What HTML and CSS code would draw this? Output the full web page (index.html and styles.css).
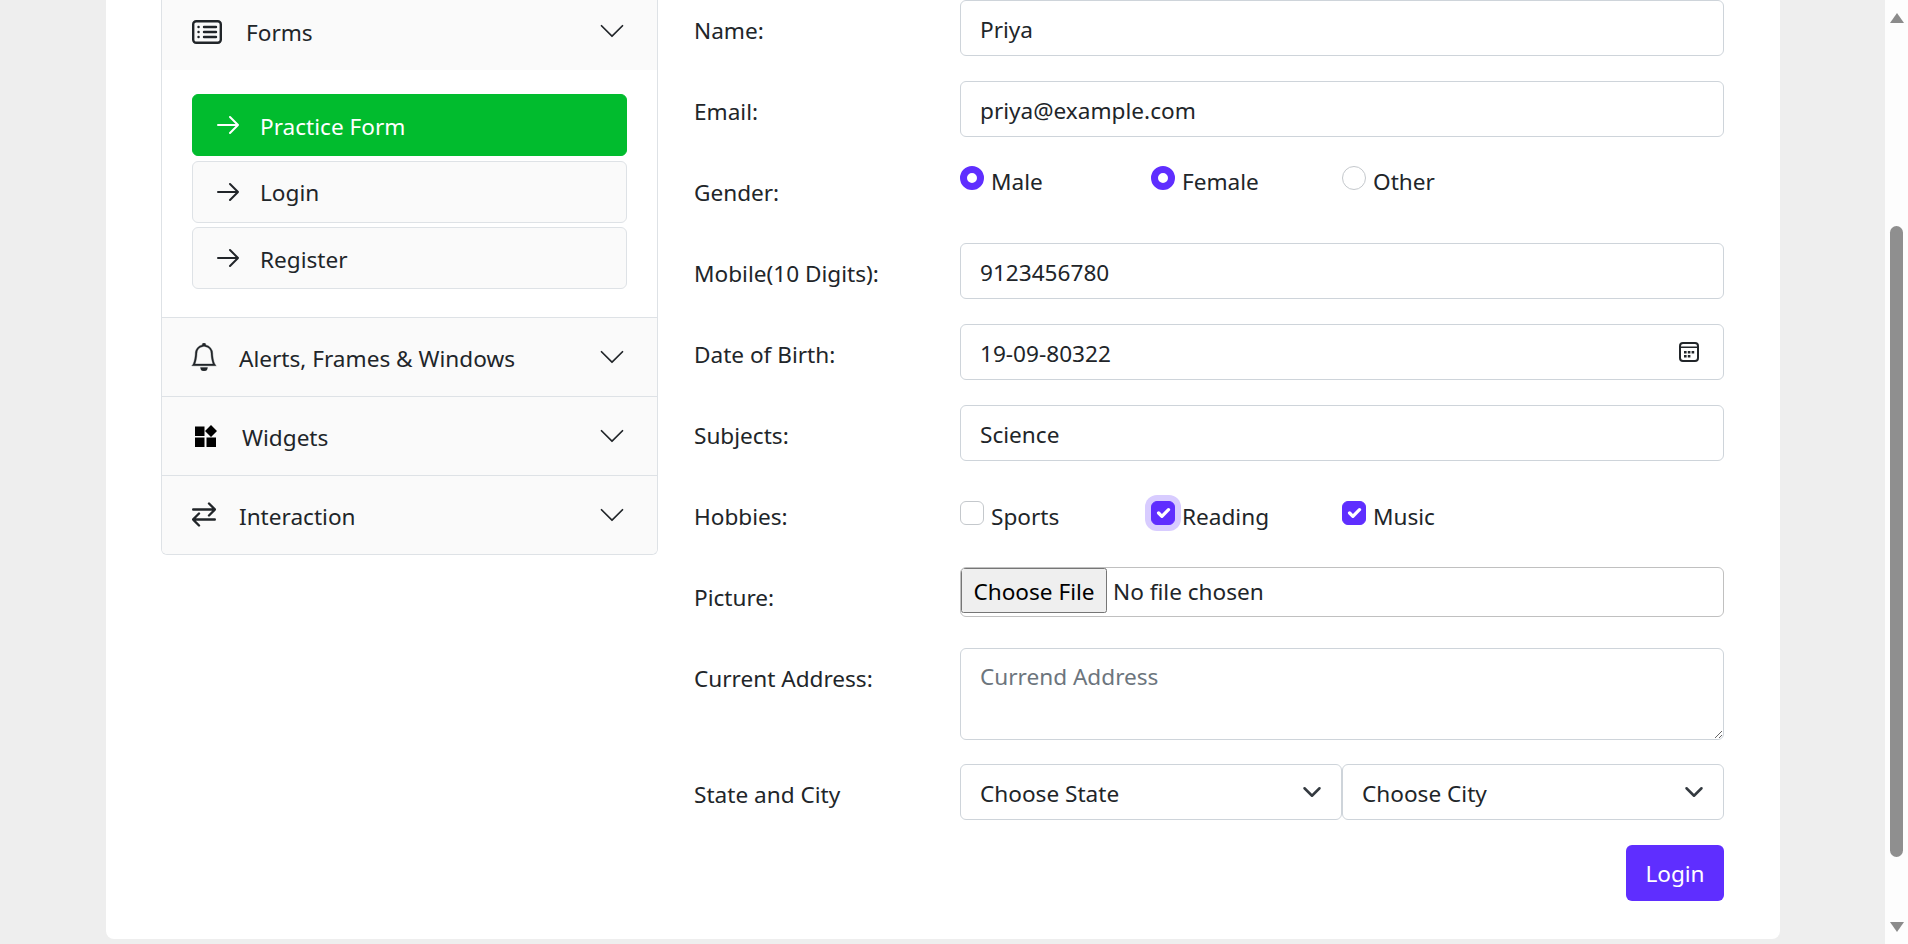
FILE: index.html
```html
<!DOCTYPE html>
<html>
<head>
	<meta charset="UTF-8">
	<title>Practice Form</title>
	<link rel="stylesheet" href="styles.css">
</head>
<body>
	<main class="page">
		<div class="card">
			<!-- menu lateral -->
			<nav class="sidebar">
				<div class="menu-head menu-head-open">
					<svg class="icon-forms" viewBox="0 0 30 24" fill="none" stroke="currentColor" stroke-width="2.4" stroke-linecap="round"><rect x="1.2" y="1.2" width="27.6" height="21.6" rx="3"/><path d="M12 7h12M12 12h12M12 17h12M6.5 7h.1M6.5 12h.1M6.5 17h.1"/></svg>
					<span class="menu-title menu-title-forms">Forms</span>
					<svg class="chevron" viewBox="0 0 16 16" fill="currentColor"><path d="M1.646 4.646a.5.5 0 0 1 .708 0L8 10.293l5.646-5.647a.5.5 0 0 1 .708.708l-6 6a.5.5 0 0 1-.708 0l-6-6a.5.5 0 0 1 0-.708"/></svg>
				</div>
				<div class="submenu">
					<a class="submenu-item active"><svg class="arrow" viewBox="0 0 22 20" fill="none" stroke="currentColor" stroke-width="2" stroke-linecap="round" stroke-linejoin="round"><path d="M1 10h20M13 2l8 8-8 8"/></svg>Practice Form</a>
					<a class="submenu-item"><svg class="arrow" viewBox="0 0 22 20" fill="none" stroke="currentColor" stroke-width="2" stroke-linecap="round" stroke-linejoin="round"><path d="M1 10h20M13 2l8 8-8 8"/></svg>Login</a>
					<a class="submenu-item"><svg class="arrow" viewBox="0 0 22 20" fill="none" stroke="currentColor" stroke-width="2" stroke-linecap="round" stroke-linejoin="round"><path d="M1 10h20M13 2l8 8-8 8"/></svg>Register</a>
				</div>
				<div class="menu-head">
					<svg class="icon-bell" viewBox="0 0 16 16" fill="currentColor" stroke="currentColor" stroke-width="0.2"><path d="M8 16a2 2 0 0 0 2-2H6a2 2 0 0 0 2 2M8 1.918l-.797.161A4 4 0 0 0 4 6c0 .628-.134 2.197-.459 3.742-.16.767-.376 1.566-.663 2.258h10.244c-.287-.692-.502-1.49-.663-2.258C12.134 8.197 12 6.628 12 6a4 4 0 0 0-3.203-3.92zM14.22 12c.223.447.481.801.78 1H1c.299-.199.557-.553.78-1C2.68 10.2 3 6.88 3 6c0-2.42 1.72-4.44 4.005-4.901a1 1 0 1 1 1.99 0A5 5 0 0 1 13 6c0 .88.32 4.2 1.22 6"/></svg>
					<span class="menu-title">Alerts, Frames &amp; Windows</span>
					<svg class="chevron" viewBox="0 0 16 16" fill="currentColor"><path d="M1.646 4.646a.5.5 0 0 1 .708 0L8 10.293l5.646-5.647a.5.5 0 0 1 .708.708l-6 6a.5.5 0 0 1-.708 0l-6-6a.5.5 0 0 1 0-.708"/></svg>
				</div>
				<div class="menu-head">
					<svg class="icon-widgets" viewBox="0 0 22 22" fill="#000"><path d="M0 1.5h9.5V11H0zM0 12.5h9.5V22H0zM11.5 12.5H21V22h-9.5zM16 0l6 6-6 6-6-6z"/></svg>
					<span class="menu-title menu-title-widgets">Widgets</span>
					<svg class="chevron" viewBox="0 0 16 16" fill="currentColor"><path d="M1.646 4.646a.5.5 0 0 1 .708 0L8 10.293l5.646-5.647a.5.5 0 0 1 .708.708l-6 6a.5.5 0 0 1-.708 0l-6-6a.5.5 0 0 1 0-.708"/></svg>
				</div>
				<div class="menu-head">
					<svg class="icon-swap" viewBox="0 0 24 25" fill="none" stroke="currentColor" stroke-width="2.4" stroke-linecap="round" stroke-linejoin="round"><path d="M1.2 7.5h21.6M17 1.5l6 6-6 6M22.8 17.5H1.2M7 11.5l-6 6 6 6"/></svg>
					<span class="menu-title">Interaction</span>
					<svg class="chevron" viewBox="0 0 16 16" fill="currentColor"><path d="M1.646 4.646a.5.5 0 0 1 .708 0L8 10.293l5.646-5.647a.5.5 0 0 1 .708.708l-6 6a.5.5 0 0 1-.708 0l-6-6a.5.5 0 0 1 0-.708"/></svg>
				</div>
			</nav>

			<!-- formulario -->
			<form class="form">
				<div class="row">
					<label class="row-label">Name:</label>
					<input class="field" type="text" value="Priya">
				</div>
				<div class="row">
					<label class="row-label">Email:</label>
					<input class="field" type="text" value="priya@example.com">
				</div>
				<div class="row">
					<label class="row-label">Gender:</label>
					<div class="options options-gender">
						<label class="option"><input class="radio" type="radio" name="g1" checked>Male</label>
						<label class="option"><input class="radio" type="radio" name="g2" checked>Female</label>
						<label class="option"><input class="radio" type="radio" name="g3">Other</label>
					</div>
				</div>
				<div class="row">
					<label class="row-label">Mobile(10 Digits):</label>
					<input class="field" type="text" value="9123456780">
				</div>
				<div class="row">
					<label class="row-label">Date of Birth:</label>
					<div class="date-wrap">
						<input class="field" type="text" value="19-09-80322">
						<svg class="date-icon" viewBox="0 0 20 20" fill="currentColor"><rect x="1" y="1" width="18" height="18" rx="3" fill="none" stroke="currentColor" stroke-width="2"/><path d="M1 4.5h18v1.4H1zM5 9h2.6v2.6H5zM8.8 9h2.6v2.6H8.8zM12.6 9h2.6v2.6h-2.6zM5 13h2.6v2.6H5zM8.8 13h2.6v2.6H8.8z"/></svg>
					</div>
				</div>
				<div class="row">
					<label class="row-label">Subjects:</label>
					<input class="field" type="text" value="Science">
				</div>
				<div class="row">
					<label class="row-label">Hobbies:</label>
					<div class="options options-hobbies">
						<label class="option"><input class="check" type="checkbox">Sports</label>
						<label class="option"><input class="check check-focus" type="checkbox" checked>Reading</label>
						<label class="option"><input class="check" type="checkbox" checked>Music</label>
					</div>
				</div>
				<div class="row">
					<label class="row-label">Picture:</label>
					<input class="file" type="file">
				</div>
				<div class="row row-area">
					<label class="row-label">Current Address:</label>
					<textarea class="field area" placeholder="Currend Address"></textarea>
				</div>
				<div class="row">
					<label class="row-label">State and City</label>
					<div class="selects">
						<select class="field select"><option>Choose State</option></select>
						<select class="field select"><option>Choose City</option></select>
					</div>
				</div>
				<div class="actions">
					<button class="btn-login" type="button">Login</button>
				</div>
			</form>
		</div>
	</main>

	<!-- barra de desplazamiento -->
	<div class="scrollbar">
		<span class="scroll-up"></span>
		<span class="scroll-thumb"></span>
		<span class="scroll-down"></span>
	</div>
</body>
</html>
```

FILE: styles.css
```css
* {
	box-sizing: border-box;
}

html, body {
	height: 100%;
}

body {
	margin: 0;
	display: flex;
	overflow: hidden;
	background-color: #eeeeee;
	color: #212529;
	font-family: 'Noto Sans', sans-serif;
	font-size: 22.6px;
}

.page {
	flex: 1;
	padding: 0 105px 5px 106px;
}

.card {
	display: flex;
	align-items: flex-start;
	height: 100%;
	padding: 0 56px 0 55px;
	background-color: #fff;
	border-radius: 0 0 8px 8px;
}

/* Menu lateral */
.sidebar {
	width: 497px;
	flex-shrink: 0;
	border: 1px solid #dee2e6;
	border-top: none;
	border-radius: 0 0 6px 6px;
	overflow: hidden;
}

.menu-head {
	display: flex;
	align-items: center;
	height: 79px;
	padding: 0 30px;
	background-color: #fafafa;
	border-top: 1px solid #dee2e6;
}

.menu-head-open {
	height: 70px;
	padding-bottom: 7px;
	border-top: none;
}

.icon-forms {
	width: 30px;
	height: 24px;
	flex-shrink: 0;
}

.icon-bell {
	width: 28px;
	height: 28px;
	flex-shrink: 0;
	margin-left: -2px;
}

.icon-widgets {
	width: 22px;
	height: 22px;
	flex-shrink: 0;
	margin-left: 3px;
}

.icon-swap {
	width: 24px;
	height: 25px;
	flex-shrink: 0;
	margin-top: -2px;
}

.menu-title {
	flex: 1;
	margin-left: 21px;
	padding-top: 2px;
}

.icon-swap + .menu-title {
	margin-left: 23px;
}

.menu-title-forms {
	margin-left: 24px;
}

.menu-title-widgets {
	margin-left: 25px;
}

.chevron {
	width: 28px;
	height: 28px;
	flex-shrink: 0;
	margin-right: 1px;
	margin-top: -1px;
}

.submenu {
	display: flex;
	flex-direction: column;
	gap: 4.5px;
	padding: 24px 30px 28px;
}

.submenu-item {
	display: flex;
	align-items: center;
	height: 62px;
	padding-left: 24px;
	padding-top: 2px;
	background-color: #fafafa;
	border: 1px solid #dee2e6;
	border-radius: 6px;
}

.submenu-item.active {
	background-color: #01bc2e;
	border-color: #01bc2e;
	color: #fff;
}

.arrow {
	width: 22px;
	height: 20px;
	margin-right: 21px;
	margin-top: -2px;
}

/* Formulario */
.form {
	flex: 1;
	margin-left: 36px;
}

.row {
	display: flex;
	margin-bottom: 25px;
}

.row-area {
	margin-bottom: 24px;
}

.row-label {
	width: 266px;
	flex-shrink: 0;
	padding-top: 16px;
	line-height: 30px;
}

.field {
	display: block;
	width: 100%;
	height: 56px;
	padding: 2px 19px 0;
	background-color: #fff;
	border: 1px solid #ced4da;
	border-radius: 6px;
	color: #212529;
	font: inherit;
}

.area {
	height: 92px;
	padding-top: 12px;
}

.area::placeholder {
	color: #6c757d;
}

.date-wrap {
	position: relative;
	flex: 1;
}

.date-icon {
	position: absolute;
	top: 18px;
	right: 25px;
	width: 20px;
	height: 20px;
}

.options {
	display: flex;
	flex: 1;
	height: 56px;
}

.options-gender {
	padding-top: 4px;
}

.options-hobbies {
	padding-top: 15px;
}

.option {
	display: flex;
	align-items: flex-start;
	width: 191px;
	height: 24px;
	line-height: 32px;
}

.radio, .check {
	appearance: none;
	flex-shrink: 0;
	width: 24px;
	height: 24px;
	margin: 0 7px 0 0;
	background-color: #fff;
	border: 1px solid #c4c8cc;
}

.radio {
	border-radius: 50%;
}

.radio:checked {
	border: 7px solid #5f2eff;
}

.check {
	border-radius: 6px;
}

.check:checked {
	background-color: #5f2eff;
	border-color: #5f2eff;
	background-image: url("data:image/svg+xml,%3csvg xmlns='http://www.w3.org/2000/svg' viewBox='0 0 20 20'%3e%3cpath fill='none' stroke='%23fff' stroke-linecap='round' stroke-linejoin='round' stroke-width='3' d='m6 10 3 3 6-6'/%3e%3c/svg%3e");
}

.check-focus {
	box-shadow: 0 0 0 6px #d8ccff;
}

.file {
	flex: 1;
	min-width: 0;
	height: 50px;
	margin-bottom: 6px;
	border: 1px solid #c0c0c0;
	border-radius: 6px;
	color: #212529;
	font: inherit;
}

.file::file-selector-button {
	width: 146px;
	height: 45px;
	margin-right: 6px;
	padding: 2px 0 0;
	font: inherit;
}

.selects {
	display: flex;
	flex: 1;
}

.select {
	appearance: none;
	flex: 1;
	min-width: 0;
	background-image: url("data:image/svg+xml,%3csvg xmlns='http://www.w3.org/2000/svg' viewBox='0 0 16 16'%3e%3cpath fill='none' stroke='%23343a40' stroke-linecap='round' stroke-linejoin='round' stroke-width='2' d='m2 5 6 6 6-6'/%3e%3c/svg%3e");
	background-repeat: no-repeat;
	background-position: right 19px center;
	background-size: 20px 20px;
}

.actions {
	display: flex;
	justify-content: flex-end;
}

.btn-login {
	width: 98px;
	height: 56px;
	padding-top: 2px;
	background-color: #5f2eff;
	border: none;
	border-radius: 6px;
	color: #fff;
	font: inherit;
}

/* Barra de desplazamiento */
.scrollbar {
	display: flex;
	flex-direction: column;
	align-items: center;
	width: 23px;
	flex-shrink: 0;
	background-color: #fdfdfd;
}

.scroll-up, .scroll-down {
	width: 0;
	height: 0;
	border-left: 7.5px solid transparent;
	border-right: 7.5px solid transparent;
}

.scroll-up {
	margin-top: 13px;
	border-bottom: 10px solid #8b8b8b;
}

.scroll-thumb {
	width: 13px;
	height: 631px;
	margin-top: 203px;
	background-color: #8f8f8f;
	border-radius: 7px;
}

.scroll-down {
	margin-top: 65px;
	border-top: 10px solid #8b8b8b;
}
```
